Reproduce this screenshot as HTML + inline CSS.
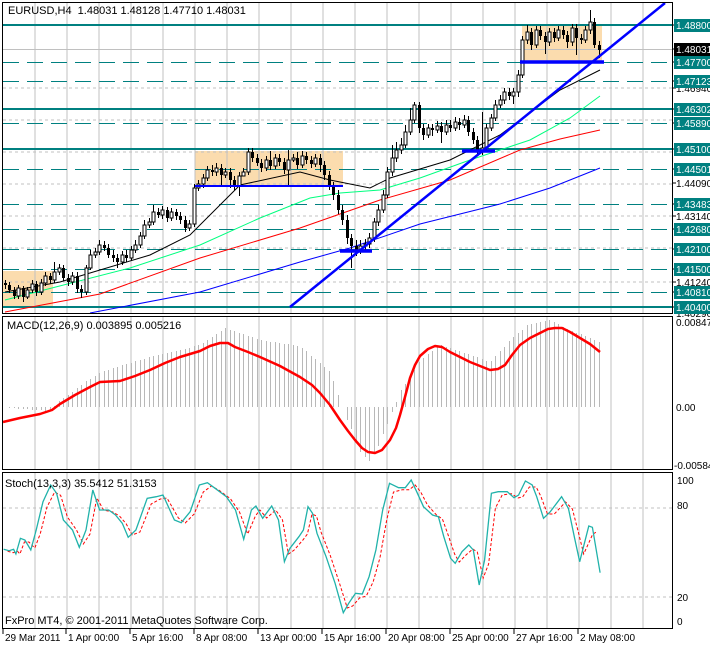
<!DOCTYPE html>
<html><head><meta charset="utf-8">
<style>
html,body{margin:0;padding:0;background:#fff;width:710px;height:645px;overflow:hidden}
svg{display:block}
text{font-family:"Liberation Sans",sans-serif;font-size:10px;fill:#000}
.t{font-size:11px}
.w{fill:#fff}
</style></head>
<body>
<svg width="710" height="645" xmlns="http://www.w3.org/2000/svg">
<defs>
<path id="vg" d="M35 0V1M67 0V1M99 0V1M131 0V1M163 0V1M195 0V1M227 0V1M259 0V1M291 0V1M323 0V1M355 0V1M387 0V1M419 0V1M451 0V1M483 0V1M515 0V1M547 0V1M579 0V1M611 0V1M643 0V1"/>
</defs>
<rect x="3" y="271" width="50" height="36" fill="#fbdcae"/>
<rect x="195" y="151" width="148" height="35" fill="#fbdcae"/>
<rect x="522" y="25" width="80" height="37" fill="#fbdcae"/>
<g stroke="#c0c0c0" stroke-dasharray="3,3" fill="none">
<use href="#vg" transform="translate(0,3) scale(1,310)"/>
<use href="#vg" transform="translate(0,317) scale(1,152)"/>
<use href="#vg" transform="translate(0,473) scale(1,155)"/>
<path d="M3 88H672M3 120H672M3 152H672M3 184H672M3 216H672M3 248H672M3 282H672M3 508H672M3 597H672"/>
</g>
<line x1="3" y1="49.5" x2="672" y2="49.5" stroke="#c0c0c0"/>
<g stroke="#008080" fill="none">
<path stroke-width="2" d="M3 25H672M3 109H672M3 149H672M3 307H672"/>
<path stroke-dasharray="16,8" d="M3 62.5H672M3 81.5H672M3 123.5H672M3 169.5H672M3 204.5H672M3 229.5H672M3 249.5H672M3 269.5H672M3 292.5H672"/>
</g>
<polyline fill="none" stroke="#000" points="5,292 60,282 100,270 150,255 190,235 240,185 300,172 330,180 370,188 390,178 450,160 500,135 560,90 600,70"/>
<polyline fill="none" stroke="#00ff7f" points="5,300 130,268 200,245 260,218 310,198 340,193 380,190 420,178 470,160 530,140 570,118 600,96"/>
<polyline fill="none" stroke="#ff0000" points="5,312 100,294 200,258 300,228 380,200 450,180 520,150 560,139 600,130"/>
<polyline fill="none" stroke="#0000ff" points="90,313 200,292 300,262 350,248 420,224 500,204 550,188 600,168"/>
<path stroke="#000" fill="none" d="M5.5 280V289M9.5 282V293M14.5 287V299M18.5 285V299M23.5 286V302M27.5 287V299M32.5 280V293M36.5 281V296M41.5 279V295M45.5 272V286M50.5 273V284M54.5 262V283M59.5 264V275M63.5 265V281M68.5 274V286M72.5 272V285M77.5 272V293M81.5 285V298M86.5 265V295M90.5 250V270M95.5 248V258M99.5 240V255M104.5 241V251M108.5 244V258M113.5 250V262M117.5 254V268M122.5 251V265M126.5 250V262M131.5 246V261M135.5 240V253M140.5 232V248M144.5 220V239M149.5 218V228M153.5 205V225M158.5 208V218M162.5 206V219M167.5 207V222M171.5 208V221M176.5 209V220M180.5 212V224M185.5 216V232M189.5 220V231M194.5 184V227M198.5 180V191M203.5 174V188M207.5 166V181M212.5 165V176M216.5 163V176M221.5 164V186M225.5 168V178M230.5 168V188M234.5 176V190M239.5 172V196M243.5 168V176M248.5 148V175M252.5 148V162M257.5 154V166M261.5 159V172M266.5 156V171M270.5 151V170M275.5 154V169M279.5 154V166M284.5 158V174M288.5 150V186M293.5 154V162M297.5 152V169M302.5 151V168M306.5 152V164M311.5 156V168M315.5 154V167M320.5 154V172M324.5 161V180M329.5 171V190M333.5 182V200M338.5 190V214M342.5 205V225M347.5 215V244M351.5 234V268M356.5 240V256M360.5 240V254M365.5 239V250M369.5 233V248M374.5 218V242M378.5 205V226M383.5 190V213M387.5 167V198M392.5 145V176M396.5 142V162M401.5 138V154M405.5 125V148M410.5 108V135M414.5 102V123M419.5 102V133M423.5 124V140M428.5 124V138M432.5 124V136M437.5 121V133M441.5 122V143M446.5 120V135M450.5 120V132M455.5 117V131M459.5 118V130M464.5 115V128M468.5 116V136M473.5 128V144M477.5 136V156M482.5 112V155M486.5 124V151M491.5 114V131M495.5 100V121M500.5 95V108M504.5 88V104M509.5 88V100M513.5 88V104M518.5 70V97M522.5 36V78M527.5 25V44M531.5 28V50M536.5 26V48M540.5 26V40M545.5 32V54M549.5 28V46M554.5 28V42M558.5 26V41M563.5 26V39M567.5 31V48M572.5 24V46M576.5 24V55M581.5 34V44M585.5 26V43M590.5 10V34M594.5 18V48M599.5 41V58"/>
<path fill="#000" d="M4 283h3v2h-3zM8 285h3v5h-3zM13 290h3v6h-3zM22 288h3v9h-3zM35 284h3v8h-3zM49 276h3v4h-3zM62 268h3v10h-3zM67 278h3v4h-3zM76 276h3v13h-3zM80 289h3v3h-3zM103 245h3v3h-3zM107 248h3v7h-3zM112 255h3v3h-3zM116 258h3v4h-3zM125 255h3v3h-3zM157 212h3v3h-3zM166 210h3v8h-3zM175 212h3v4h-3zM179 216h3v4h-3zM184 220h3v8h-3zM211 170h3v2h-3zM220 168h3v7h-3zM229 172h3v8h-3zM233 180h3v6h-3zM251 152h3v6h-3zM256 158h3v5h-3zM260 163h3v5h-3zM269 160h3v6h-3zM278 158h3v4h-3zM283 162h3v8h-3zM296 158h3v7h-3zM305 156h3v4h-3zM310 160h3v4h-3zM319 158h3v7h-3zM323 165h3v10h-3zM328 175h3v11h-3zM332 186h3v9h-3zM337 195h3v15h-3zM341 210h3v10h-3zM346 220h3v18h-3zM350 238h3v8h-3zM355 246h3v4h-3zM418 105h3v23h-3zM422 128h3v7h-3zM431 128h3v2h-3zM440 126h3v6h-3zM449 125h3v3h-3zM458 122h3v3h-3zM467 120h3v12h-3zM472 132h3v8h-3zM476 140h3v12h-3zM508 92h3v4h-3zM530 32h3v13h-3zM539 30h3v6h-3zM544 36h3v6h-3zM553 32h3v6h-3zM562 30h3v5h-3zM566 35h3v7h-3zM575 28h3v10h-3zM580 38h3v2h-3zM593 22h3v23h-3zM598 45h3v5h-3z"/>
<path fill="#fff" stroke="#000" d="M17 288h3v8h-3zM26 290h3v7h-3zM31 284h3v6h-3zM40 283h3v9h-3zM44 276h3v7h-3zM53 272h3v8h-3zM58 268h3v4h-3zM71 276h3v6h-3zM85 268h3v24h-3zM89 255h3v13h-3zM94 252h3v3h-3zM98 245h3v7h-3zM121 255h3v7h-3zM130 250h3v8h-3zM134 245h3v5h-3zM139 236h3v9h-3zM143 225h3v11h-3zM148 222h3v3h-3zM152 212h3v10h-3zM161 210h3v5h-3zM170 212h3v6h-3zM188 224h3v4h-3zM193 188h3v36h-3zM197 184h3v4h-3zM202 178h3v6h-3zM206 170h3v8h-3zM215 168h3v4h-3zM224 172h3v3h-3zM238 176h3v10h-3zM242 172h3v4h-3zM247 152h3v20h-3zM265 160h3v8h-3zM274 158h3v8h-3zM287 160h3v10h-3zM292 158h3v2h-3zM301 156h3v9h-3zM314 158h3v6h-3zM359 246h3v4h-3zM364 244h3v2h-3zM368 238h3v6h-3zM373 222h3v16h-3zM377 210h3v12h-3zM382 195h3v15h-3zM386 172h3v23h-3zM391 158h3v14h-3zM395 150h3v8h-3zM400 145h3v5h-3zM404 132h3v13h-3zM409 120h3v12h-3zM413 105h3v15h-3zM427 128h3v7h-3zM436 126h3v4h-3zM445 125h3v7h-3zM454 122h3v6h-3zM463 120h3v5h-3zM481 148h3v4h-3zM485 128h3v20h-3zM490 118h3v10h-3zM494 105h3v13h-3zM499 100h3v5h-3zM503 92h3v8h-3zM512 92h3v4h-3zM517 75h3v17h-3zM521 40h3v35h-3zM526 32h3v8h-3zM535 30h3v15h-3zM548 32h3v10h-3zM557 30h3v8h-3zM571 28h3v14h-3zM584 30h3v10h-3zM589 22h3v8h-3z"/>
<g stroke="#0000ff">
<line x1="290" y1="307" x2="665" y2="3" stroke-width="2.5"/>
<line x1="195" y1="186" x2="343" y2="186" stroke-width="2"/>
<line x1="520" y1="62" x2="604" y2="62" stroke-width="3.5"/>
<line x1="462" y1="151" x2="495" y2="151" stroke-width="3.5"/>
<line x1="340" y1="251" x2="372" y2="251" stroke-width="3.5"/>
</g>
<path stroke="#b8b8b8" fill="none" d="M5.5 407V407M9.5 407V408M14.5 407V408M18.5 407V409M23.5 407V409M27.5 407V409M32.5 407V410M36.5 407V410M41.5 407V410M45.5 407V411M50.5 407V411M54.5 407V406M59.5 407V401M63.5 407V398M68.5 407V395M72.5 407V392M77.5 407V388M81.5 407V385M86.5 407V381M90.5 407V379M95.5 407V376M99.5 407V373M104.5 407V371M108.5 407V370M113.5 407V368M117.5 407V367M122.5 407V365M126.5 407V364M131.5 407V363M135.5 407V361M140.5 407V360M144.5 407V359M149.5 407V357M153.5 407V356M158.5 407V355M162.5 407V354M167.5 407V353M171.5 407V352M176.5 407V351M180.5 407V350M185.5 407V349M189.5 407V348M194.5 407V346M198.5 407V345M203.5 407V343M207.5 407V340M212.5 407V337M216.5 407V334M221.5 407V331M225.5 407V328M230.5 407V330M234.5 407V331M239.5 407V333M243.5 407V334M248.5 407V336M252.5 407V337M257.5 407V339M261.5 407V340M266.5 407V341M270.5 407V342M275.5 407V342M279.5 407V343M284.5 407V344M288.5 407V344M293.5 407V345M297.5 407V346M302.5 407V348M306.5 407V351M311.5 407V356M315.5 407V359M320.5 407V363M324.5 407V367M329.5 407V371M333.5 407V381M338.5 407V395M342.5 407V407M347.5 407V420M351.5 407V429M356.5 407V442M360.5 407V452M365.5 407V457M369.5 407V461M374.5 407V454M378.5 407V446M383.5 407V434M387.5 407V424M392.5 407V412M396.5 407V402M401.5 407V390M405.5 407V384M410.5 407V376M414.5 407V370M419.5 407V362M423.5 407V358M428.5 407V354M432.5 407V351M437.5 407V347M441.5 407V345M446.5 407V347M450.5 407V348M455.5 407V350M459.5 407V351M464.5 407V353M468.5 407V354M473.5 407V356M477.5 407V357M482.5 407V359M486.5 407V361M491.5 407V361M495.5 407V356M500.5 407V351M504.5 407V347M509.5 407V341M513.5 407V337M518.5 407V333M522.5 407V330M527.5 407V325M531.5 407V324M536.5 407V323M540.5 407V322M545.5 407V321M549.5 407V320M554.5 407V322M558.5 407V324M563.5 407V327M567.5 407V329M572.5 407V331M576.5 407V333M581.5 407V334M585.5 407V336M590.5 407V338M594.5 407V340M599.5 407V342"/>
<polyline fill="none" stroke="#ff0000" stroke-width="2.5" stroke-linejoin="round" points="3,422 20,418 40,414 52,410 60,404 75,395 90,387 100,382 120,381 135,376 150,370 165,363 180,357 200,351 210,346 220,343 228,343 235,347 248,352 260,357 280,366 300,377 312,385 320,393 330,405 340,420 348,431 355,440 362,448 368,452 375,453 382,450 390,440 396,428 400,415 405,397 410,378 415,365 420,356 428,349 435,346 442,347 450,352 460,357 470,362 480,366 490,370 498,369 505,365 512,355 520,345 530,338 540,333 548,329 555,328 562,328 570,332 580,338 590,344 600,352"/>
<polyline fill="none" stroke="#ff0000" stroke-dasharray="3,2" transform="translate(4,2)" points="3.6,549.3 9.1,550.7 13.6,549.3 15.9,552 20.4,540 24.9,540 30.8,546 36.2,532 43,505 50.7,490 56.6,493.3 63.4,515 72.5,528 79.3,542 86,532 92.8,496 99.6,508 108.7,510 115.5,514 122.3,522 128.2,533 135.9,530 147.2,502 156.3,497 163,496 174.4,516 181.2,521 190.2,512 199.3,490 207.4,484 215.1,488.3 226.4,496.7 235.5,510 243.7,532 251.4,514 255.9,508 262.7,516 271.7,508 278.5,518 284.4,552 289.9,548.3 298.9,538 303.4,532 308,512 312.5,514 317,530 326.1,553 335.1,580 343.3,606 348.7,604 355.5,596 362.3,594 369.1,580 375.9,556 382.7,518 389.5,490 398.6,487.7 405.3,487.7 411.2,483 416.7,490 423.5,503 432.5,513 438.4,517 443.8,532 450.6,552 455.2,560 462,553 468.8,547 473.3,550 479.2,576 484.6,562 491.4,506 498.2,493 507.2,491.7 514,496 518.6,495 525.4,485 532.2,485 536.7,494 543.5,512 550.3,512 561.6,500 568.4,507 574.3,530 579.7,552 588.8,532 592.4,530"/>
<polyline fill="none" stroke="#20b2aa" stroke-width="1.3" points="3.6,549.3 9.1,550.7 13.6,549.3 15.9,554 20.4,538.3 24.9,540 30.8,550 36.2,530 43,501.7 50.7,485 56.6,493.3 63.4,520 72.5,530 79.3,547.3 86,530 92.8,490 99.6,510 108.7,510 115.5,515 122.3,523.3 128.2,537.3 135.9,530 147.2,498.3 156.3,496.7 163,495 174.4,520 181.2,522.7 190.2,511.7 199.3,485 207.4,482.7 215.1,488.3 226.4,496.7 235.5,510 243.7,539.3 251.4,510 255.9,506 262.7,518.3 271.7,506 278.5,520 284.4,561.7 289.9,548.3 298.9,536.7 303.4,530 308,506.7 312.5,513.3 317,533.3 326.1,556.7 335.1,583.3 343.3,612.7 348.7,603.3 355.5,593.3 362.3,594 369.1,576.7 375.9,550 382.7,510 389.5,483.3 398.6,487.7 405.3,487.7 411.2,480 416.7,491.7 423.5,506.7 432.5,515 438.4,516.7 443.8,536.7 450.6,558.3 455.2,563.3 462,551.7 468.8,545 473.3,550 479.2,585 484.6,560 491.4,493.3 498.2,491.7 507.2,491.7 514,497.7 518.6,495 525.4,481 532.2,485 536.7,496.7 543.5,518.3 550.3,511.7 561.6,496.7 568.4,508.3 574.3,536.7 579.7,561.7 588.8,526 592.4,527.3 600.1,572.7"/>
<g fill="none" stroke="#000">
<rect x="2.5" y="2.5" width="670" height="311"/>
<rect x="2.5" y="316.5" width="670" height="153"/>
<rect x="2.5" y="472.5" width="670" height="156"/>
<path d="M672 25H675M672 62H675M672 81H675M672 109H675M672 123H675M672 149H675M672 169H675M672 204H675M672 229H675M672 249H675M672 269H675M672 292H675M672 307H675M672 49H675M672 88H676M672 183H676M672 216H676M672 282H676M3 629V634M66 629V634M130 629V634M194 629V634M258 629V634M322 629V634M386 629V634M450 629V634M514 629V634M578 629V634"/>
</g>
<text x="676" y="92">1.46940</text>
<text x="676" y="187">1.44090</text>
<text x="676" y="220">1.43140</text>
<text x="676" y="286">1.41240</text>
<text x="676" y="317">1.40290</text>
<g fill="#008080">
<rect x="674" y="19" width="36" height="13"/><rect x="674" y="56" width="36" height="13"/><rect x="674" y="75" width="36" height="13"/><rect x="674" y="103" width="36" height="13"/><rect x="674" y="117" width="36" height="13"/><rect x="674" y="143" width="36" height="13"/><rect x="674" y="163" width="36" height="13"/><rect x="674" y="198" width="36" height="13"/><rect x="674" y="223" width="36" height="13"/><rect x="674" y="243" width="36" height="13"/><rect x="674" y="263" width="36" height="13"/><rect x="674" y="286" width="36" height="13"/><rect x="674" y="301" width="36" height="13"/>
</g>
<rect x="674" y="43" width="36" height="13" fill="#000"/>
<text class="w" x="676" y="53">1.48031</text>
<text class="w" x="676" y="29">1.48800</text>
<text class="w" x="676" y="66">1.47700</text>
<text class="w" x="676" y="85">1.47123</text>
<text class="w" x="676" y="113">1.46302</text>
<text class="w" x="676" y="127">1.45890</text>
<text class="w" x="676" y="153">1.45100</text>
<text class="w" x="676" y="173">1.44501</text>
<text class="w" x="676" y="208">1.43483</text>
<text class="w" x="676" y="233">1.42680</text>
<text class="w" x="676" y="253">1.42100</text>
<text class="w" x="676" y="273">1.41500</text>
<text class="w" x="676" y="296">1.40810</text>
<text class="w" x="676" y="311">1.40400</text>
<text x="676" y="326">0.00847</text>
<text x="676" y="411">0.00</text>
<text x="674" y="469">-0.00584</text>
<text x="677" y="484">100</text>
<text x="677" y="509">80</text>
<text x="677" y="601">20</text>
<text x="677" y="625">0</text>
<text x="5" y="641">29 Mar 2011</text>
<text x="68" y="641">1 Apr 00:00</text>
<text x="132" y="641">5 Apr 16:00</text>
<text x="196" y="641">8 Apr 08:00</text>
<text x="260" y="641">13 Apr 00:00</text>
<text x="324" y="641">15 Apr 16:00</text>
<text x="388" y="641">20 Apr 08:00</text>
<text x="452" y="641">25 Apr 00:00</text>
<text x="516" y="641">27 Apr 16:00</text>
<text x="580" y="641">2 May 08:00</text>
<text class="t" x="8" y="14" xml:space="preserve">EURUSD,H4  1.48031 1.48128 1.47710 1.48031</text>
<text class="t" x="7" y="329">MACD(12,26,9) 0.003895 0.005216</text>
<text class="t" x="5" y="487">Stoch(13,3,3) 35.5412 51.3153</text>
<text class="t" x="5" y="624">FxPro MT4, © 2001-2011 MetaQuotes Software Corp.</text>
</svg>
</body></html>
